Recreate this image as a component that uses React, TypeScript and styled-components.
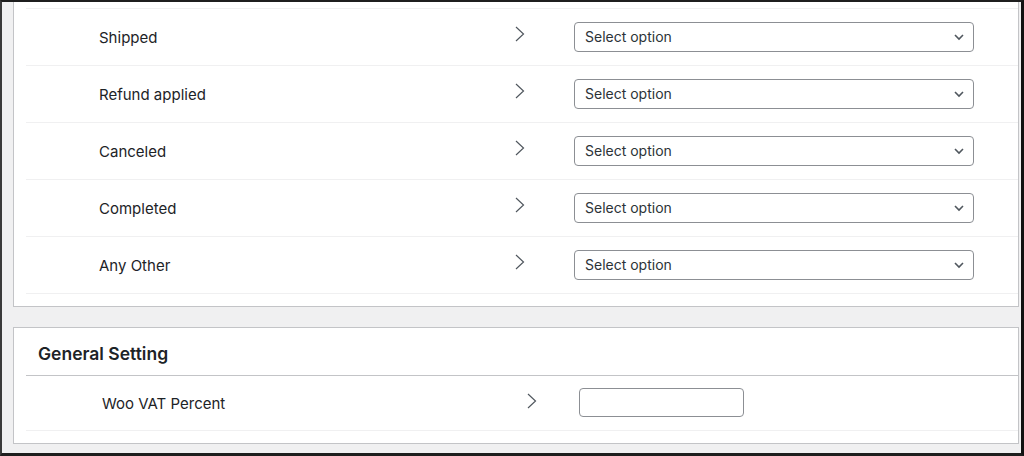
import React from "react";
import styled, { createGlobalStyle } from "styled-components";

const Global = createGlobalStyle`
  html, body { margin: 0; padding: 0; background: #f0f0f1; }
  body { font-family: Inter, "Noto Sans", "Liberation Sans", sans-serif; color: #1d2327; }
  * { box-sizing: border-box; }
`;

const Frame = styled.div`
  width: 1024px;
  height: 456px;
  overflow: hidden;
  background: #f0f0f1;
  border-top: 2px solid #1e1e1e;
  border-left: 2px solid #3a3a3a;
  border-right: 3px solid #111;
  border-bottom: 3px solid #1e1e1e;
  padding: 0 2px 0 11px;
  display: flex;
  flex-direction: column;
`;

const Panel = styled.section<{ $top?: boolean }>`
  background: #fff;
  border: 1px solid #c3c4c7;
  border-top: ${(p) => (p.$top ? "none" : "1px solid #c3c4c7")};
  padding: ${(p) => (p.$top ? "6px 0 12px 12px" : "0 0 12px 12px")};
  margin-top: ${(p) => (p.$top ? "0" : "20px")};
`;

const List = styled.div`
  border-bottom: 1px solid #f0f0f1;
`;

const Row = styled.div<{ $cols: string; $h: number; $line?: boolean }>`
  display: grid;
  grid-template-columns: ${(p) => p.$cols};
  align-items: center;
  height: ${(p) => p.$h + (p.$line ? 1 : 0)}px;
  border-top: ${(p) => (p.$line ? "1px solid #f0f0f1" : "none")};
`;

const Label = styled.div<{ $pad: number }>`
  padding-left: ${(p) => p.$pad}px;
  font-size: 15px;
  color: #1d2327;
  white-space: nowrap;
`;

const Arrow = styled.div<{ $shift: number }>`
  display: flex;
  align-items: center;
  height: 16px;
  margin-top: ${(p) => p.$shift}px;
`;

const SelectBox = styled.div`
  width: 400px;
  height: 30px;
  border: 1px solid #8c8f94;
  border-radius: 4px;
  display: flex;
  align-items: center;
  justify-content: space-between;
  padding: 0 8px 1px 10px;
  font-size: 14px;
  color: #2c3338;
`;

const TextInput = styled.div`
  width: 165px;
  height: 29px;
  border: 1px solid #8c8f94;
  border-radius: 4px;
  background: #fff;
  margin-top: -1px;
`;

const Heading = styled.h2`
  margin: 0;
  height: 48px;
  border-bottom: 1px solid #c3c4c7;
  display: flex;
  align-items: center;
  padding: 4px 0 0 12px;
  font-size: 17.5px;
  font-weight: 600;
  color: #1d2327;
`;

const Chevron = () => (
  <svg width="10" height="16" viewBox="0 0 10 16">
    <polyline points="1,1 8.5,8 1,15" fill="none" stroke="#50575e" strokeWidth="1.2" />
  </svg>
);

const Caret = () => (
  <svg width="12" height="8" viewBox="0 0 12 8">
    <polyline points="2,2 6,6 10,2" fill="none" stroke="#50575e" strokeWidth="1.6" />
  </svg>
);

const statuses = ["Shipped", "Refund applied", "Canceled", "Completed", "Any Other"];

export default function App() {
  return (
    <>
      <Global />
      <Frame>
        <Panel $top>
          <List>
            {statuses.map((s) => (
              <Row key={s} $cols="489px 59px 400px" $h={56} $line>
                <Label $pad={73}>{s}</Label>
                <Arrow $shift={-6}>
                  <Chevron />
                </Arrow>
                <SelectBox>
                  <span>Select option</span>
                  <Caret />
                </SelectBox>
              </Row>
            ))}
          </List>
        </Panel>
        <Panel>
          <Heading>General Setting</Heading>
          <List>
            <Row $cols="501px 52px 165px" $h={54}>
              <Label $pad={76}>Woo VAT Percent</Label>
              <Arrow $shift={-4}>
                <Chevron />
              </Arrow>
              <TextInput />
            </Row>
          </List>
        </Panel>
      </Frame>
    </>
  );
}
